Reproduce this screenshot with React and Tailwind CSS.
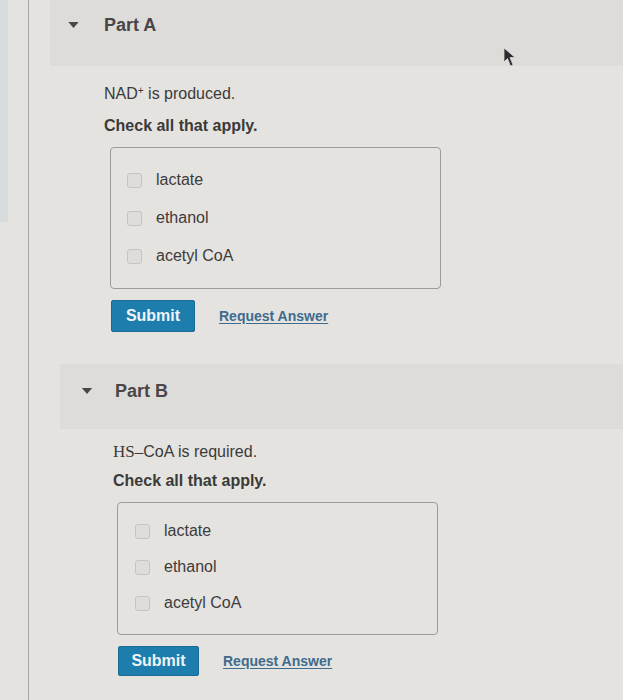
import React from 'react';

const Caret = ({ className }) => (
  <svg className={className} viewBox="0 0 12 7" width="12" height="7">
    <polygon points="0,0 12,0 6,7" fill="#4a4548" />
  </svg>
);

const Checkbox = ({ label }) => (
  <label className="flex items-center h-[20px] gap-[14px]">
    <span className="w-[15px] h-[15px] rounded-[3px] border border-[#c6c4c0] bg-[#dfddd9] shrink-0" />
    <span className="text-[16px] leading-[20px] text-[#3d3b3b]">{label}</span>
  </label>
);

const options = ['lactate', 'ethanol', 'acetyl CoA'];

const App = () => {
  return (
    <div
      className="min-h-[700px] w-[623px] flex bg-[#e5e3df] overflow-hidden"
      style={{ fontFamily: '"Liberation Sans", Arial, sans-serif' }}
    >
      {/* left rail */}
      <div className="w-[29px] shrink-0 border-r border-[#a8a6a2]">
        <div className="w-[8px] h-[222px] bg-[#d7dddc]" />
      </div>

      <div className="flex-1">
        {/* Part A */}
        <div className="relative ml-[21px] h-[66px] bg-[#dedcd8] pt-[14px] pl-[18px] flex items-start">
          <div className="flex items-center h-[22px]">
            <Caret className="w-[11px] h-[6px]" />
            <span className="ml-[25px] text-[18px] leading-[22px] font-bold text-[#4a4548]">Part A</span>
          </div>
          {/* mouse pointer */}
          <svg className="absolute left-[453px] top-[47px]" width="14" height="21" viewBox="0 0 14 21">
            <path d="M1 1 L1 15 L4.5 11.5 L7.5 19 L10 18 L7 10.5 L12 10.5 Z" fill="#2b2a2e" stroke="#d8d6d2" strokeWidth="0.8" />
          </svg>
        </div>

        <div className="pl-[75px]">
          <p className="mt-[18px] text-[16px] leading-[20px] text-[#3b3a3a]">
            NAD<sup className="text-[10px]">+</sup> is produced.
          </p>
          <p className="mt-[12px] text-[16px] leading-[20px] font-bold text-[#3b3a3a]">Check all that apply.</p>

          <div className="mt-[11px] ml-[6px] w-[331px] border border-[#9d9b98] rounded-[4px] pt-[22px] pb-[22px] pl-[16px] flex flex-col gap-[18px]">
            {options.map((o) => (
              <Checkbox key={o} label={o} />
            ))}
          </div>

          <div className="mt-[11px] ml-[7px] flex items-center">
            <button className="w-[84px] h-[32px] rounded-[2px] bg-[#1d7dad] border border-[#176a94] text-[16px] font-bold text-[#eef4f8]">
              Submit
            </button>
            <a className="ml-[24px] text-[14px] font-bold text-[#3e6b8e] underline underline-offset-2">Request Answer</a>
          </div>
        </div>

        {/* Part B */}
        <div className="mt-[32px] ml-[31px] h-[65px] bg-[#dedcd8] pt-[16px] pl-[21px]">
          <div className="flex items-center h-[22px]">
            <Caret className="w-[12px] h-[6px]" />
            <span className="ml-[22px] text-[18px] leading-[22px] font-bold text-[#4a4548]">Part B</span>
          </div>
        </div>

        <div className="pl-[84px]">
          <p className="mt-[13px] text-[16px] leading-[20px] text-[#3b3a3a]">
            <span style={{ fontFamily: '"Liberation Serif", "Times New Roman", serif' }} className="text-[17px]">HS–</span>CoA is required.
          </p>
          <p className="mt-[9px] text-[16px] leading-[20px] font-bold text-[#3b3a3a]">Check all that apply.</p>

          <div className="mt-[11px] ml-[4px] w-[321px] border border-[#9d9b98] rounded-[4px] pt-[18px] pb-[21px] pl-[17px] flex flex-col gap-[16px]">
            {options.map((o) => (
              <Checkbox key={o} label={o} />
            ))}
          </div>

          <div className="mt-[11px] ml-[5px] flex items-center">
            <button className="w-[81px] h-[30px] rounded-[2px] bg-[#1d7dad] border border-[#176a94] text-[16px] font-bold text-[#eef4f8]">
              Submit
            </button>
            <a className="ml-[24px] text-[14px] font-bold text-[#3e6b8e] underline underline-offset-2">Request Answer</a>
          </div>
        </div>
      </div>
    </div>
  );
};

export default App;
